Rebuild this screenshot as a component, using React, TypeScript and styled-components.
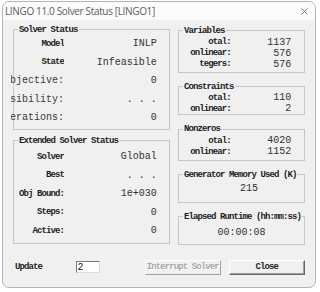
import React from "react";
import styled, { createGlobalStyle } from "styled-components";

const MONO = `"Liberation Mono", "DejaVu Sans Mono", monospace`;

const GlobalStyle = createGlobalStyle`
  html, body { margin: 0; padding: 0; background: #ffffff; }
  body { width: 320px; height: 292px; overflow: hidden; }
  * { box-sizing: border-box; }
`;

const Page = styled.div`
  width: 320px;
  height: 292px;
  padding-top: 1px;
  display: flex;
  flex-direction: column;
  align-items: flex-start;
`;

const Window = styled.div`
  margin-left: 2px;
  width: 314px;
  border: 1px solid #b4b4b4;
  border-radius: 7px;
  background: #f0f0f0;
  overflow: hidden;
  display: flex;
  flex-direction: column;
`;

const TitleBar = styled.div`
  height: 18px;
  background: #fbfbfb;
  display: flex;
  align-items: center;
  justify-content: space-between;
  padding: 0 7px 0 2px;
  font-family: "Open Sans", "Noto Sans", sans-serif;
  font-size: 10px;
  letter-spacing: -0.35px;
  color: #5c5c5c;
`;

const Body = styled.div`
  padding: 4.5px 10px 12px 10px;
  display: flex;
  flex-direction: column;
`;

const Columns = styled.div`
  display: flex;
  gap: 8px;
  align-items: flex-start;
`;

const LeftCol = styled.div`
  width: 157px;
  display: flex;
  flex-direction: column;
  gap: 5.5px;
`;

const RightCol = styled.div`
  width: 127px;
  display: flex;
  flex-direction: column;
  gap: 9px;
  padding-top: 1px;
`;

const Group = styled.fieldset<{ $pt: number; $pb: number }>`
  margin: 0;
  min-width: 0;
  border: 1px solid #c6c6c6;
  padding: ${(p) => p.$pt}px 0 ${(p) => p.$pb}px 0;
`;

const Legend = styled.legend`
  margin-left: 4px;
  padding: 0 1px;
  font-family: ${MONO};
  font-weight: bold;
  font-size: 9px;
  line-height: 10px;
  letter-spacing: -0.9px;
  color: #1e1e1e;
  white-space: nowrap;
`;

const StatRow = styled.div`
  display: flex;
  align-items: center;
  height: 18.5px;
  padding-right: 12.3px;
`;

const StatLabel = styled.div<{ $plain?: boolean }>`
  width: ${(p) => (p.$plain ? "53px" : "50px")};
  margin-left: ${(p) => (p.$plain ? "-3px" : "0")};
  flex: none;
  display: flex;
  justify-content: flex-end;
  overflow: hidden;
  white-space: nowrap;
  font-family: ${MONO};
  font-weight: ${(p) => (p.$plain ? "normal" : "bold")};
  font-size: ${(p) => (p.$plain ? "10px" : "9px")};
  letter-spacing: ${(p) => (p.$plain ? "0" : "-0.9px")};
  color: ${(p) => (p.$plain ? "#3a3a3a" : "#1e1e1e")};
`;

const Value = styled.div`
  flex: 1;
  text-align: right;
  white-space: pre;
  font-family: ${MONO};
  font-size: 10px;
  color: #333333;
`;

const CountRow = styled.div`
  display: flex;
  align-items: center;
  height: 11px;
  padding-right: 12.7px;
`;

const CountLabel = styled.div`
  width: 51.7px;
  flex: none;
  text-align: right;
  white-space: nowrap;
  font-family: ${MONO};
  font-weight: bold;
  font-size: 9px;
  letter-spacing: -0.9px;
  color: #1e1e1e;
`;

const CenterValue = styled.div<{ $shift: number }>`
  height: 16px;
  display: flex;
  align-items: center;
  justify-content: center;
  padding-left: ${(p) => p.$shift}px;
  font-family: ${MONO};
  font-size: 10px;
  color: #333333;
  white-space: pre;
`;

const Footer = styled.div`
  display: flex;
  align-items: center;
  height: 15px;
  margin-top: 15px;
  padding-left: 2px;
`;

const FooterLabel = styled.span`
  width: 61px;
  font-family: ${MONO};
  font-weight: bold;
  font-size: 9px;
  letter-spacing: -0.9px;
  color: #1e1e1e;
`;

const UpdateInput = styled.input`
  width: 24px;
  height: 12px;
  padding: 0 0 0 1px;
  margin: 0;
  border: 1px solid;
  border-color: #7a7a7a #dcdcdc #dcdcdc #7a7a7a;
  background: #ffffff;
  font-family: ${MONO};
  font-size: 10px;
  line-height: 10px;
  color: #222;
  outline: none;
`;

const DialogButton = styled.button<{ $gap: number }>`
  width: 77px;
  height: 15px;
  margin: 0 0 0 ${(p) => p.$gap}px;
  padding: 0;
  border: 1px solid;
  border-color: #ffffff #696969 #696969 #ffffff;
  box-shadow: inset -1px -1px 0 #a0a0a0;
  background: #f0f0f0;
  font-family: ${MONO};
  font-weight: bold;
  font-size: 9px;
  letter-spacing: -0.9px;
  color: #1e1e1e;
  &:disabled {
    border-color: #ffffff #a0a0a0 #a0a0a0 #ffffff;
    box-shadow: none;
    color: #a8a8a8;
    text-shadow: 1px 1px 0 #ffffff;
  }
`;

const CloseGlyph = () => (
  <svg width="7" height="7" viewBox="0 0 7 7">
    <path d="M0.5 0.5 L6.5 6.5 M6.5 0.5 L0.5 6.5" stroke="#6a6a6a" strokeWidth="0.9" fill="none" />
  </svg>
);

type Stat = { label: string; value: string; plain?: boolean };

const solverStatus: Stat[] = [
  { label: "Model", value: "INLP" },
  { label: "State", value: "Infeasible" },
  { label: "Objective:", value: "0", plain: true },
  { label: "Feasibility:", value: ". . .", plain: true },
  { label: "Iterations:", value: "0", plain: true },
];

const extended: Stat[] = [
  { label: "Solver", value: "Global" },
  { label: "Best", value: ". . ." },
  { label: "Obj Bound:", value: "1e+030" },
  { label: "Steps:", value: "0" },
  { label: "Active:", value: "0" },
];

const counts = [
  { title: "Variables", pt: 1, pb: 2, rows: [["otal:", "1137"], ["onlinear:", "576"], ["tegers:", "576"]] },
  { title: "Constraints", pt: 0.5, pb: 0, rows: [["otal:", "110"], ["onlinear:", "2"]] },
  { title: "Nonzeros", pt: 1, pb: 2.5, rows: [["otal:", "4020"], ["onlinear:", "1152"]] },
];

export default function App() {
  return (
    <>
      <GlobalStyle />
      <Page>
        <Window>
          <TitleBar>
            <span>LINGO 11.0 Solver Status [LINGO1]</span>
            <CloseGlyph />
          </TitleBar>
          <Body>
            <Columns>
              <LeftCol>
                <Group $pt={0} $pb={2}>
                  <Legend>Solver Status</Legend>
                  {solverStatus.map((s) => (
                    <StatRow key={s.label}>
                      <StatLabel $plain={s.plain}>{s.label}</StatLabel>
                      <Value>{s.value}</Value>
                    </StatRow>
                  ))}
                </Group>
                <Group $pt={2} $pb={2.5}>
                  <Legend>Extended Solver Status</Legend>
                  {extended.map((s) => (
                    <StatRow key={s.label}>
                      <StatLabel>{s.label}</StatLabel>
                      <Value>{s.value}</Value>
                    </StatRow>
                  ))}
                </Group>
              </LeftCol>
              <RightCol>
                {counts.map((c) => (
                  <Group key={c.title} $pt={c.pt} $pb={c.pb}>
                    <Legend>{c.title}</Legend>
                    {c.rows.map(([l, v]) => (
                      <CountRow key={l}>
                        <CountLabel>{l}</CountLabel>
                        <Value>{v}</Value>
                      </CountRow>
                    ))}
                  </Group>
                ))}
                <Group $pt={1} $pb={5}>
                  <Legend>Generator Memory Used (K)</Legend>
                  <CenterValue $shift={15}>215</CenterValue>
                </Group>
                <Group $pt={2.8} $pb={3.7}>
                  <Legend>Elapsed Runtime (hh:mm:ss)</Legend>
                  <CenterValue $shift={0}>00:00:08</CenterValue>
                </Group>
              </RightCol>
            </Columns>
            <Footer>
              <FooterLabel>Update</FooterLabel>
              <UpdateInput defaultValue="2" />
              <DialogButton $gap={45} disabled>
                Interrupt Solver
              </DialogButton>
              <DialogButton $gap={7.5}>Close</DialogButton>
            </Footer>
          </Body>
        </Window>
      </Page>
    </>
  );
}
